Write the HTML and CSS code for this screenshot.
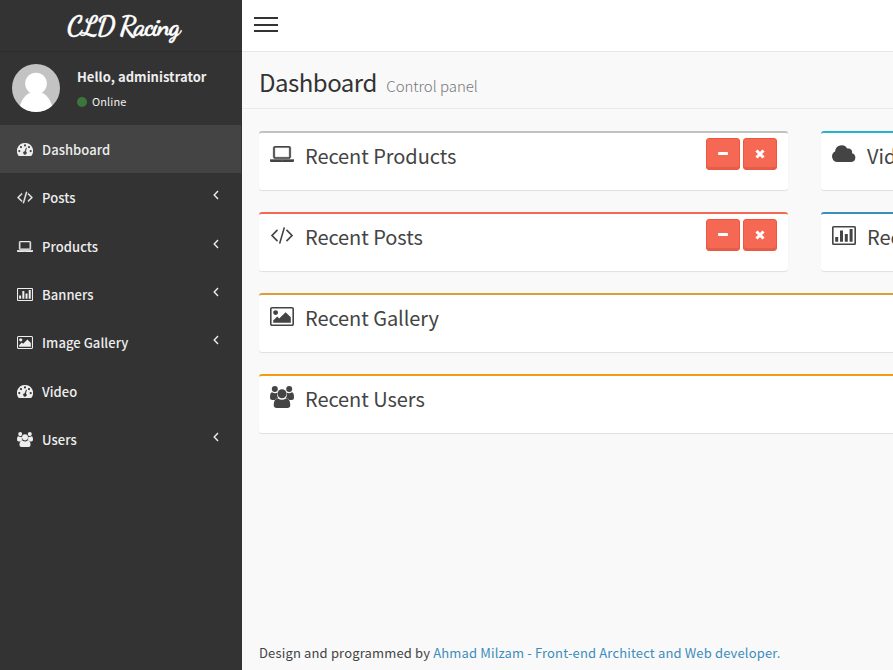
FILE: index.html
```
<!DOCTYPE html>
<html lang="en">
<head>
<meta charset="utf-8">
<title>CLD Racing | Dashboard</title>
<link rel="stylesheet" href="styles.css">
</head>
<body>
<svg class="defs" aria-hidden="true">
  <symbol id="laptop" viewBox="0 256 1920 1280" preserveAspectRatio="none"><path d="M416 1280q-66 0-113-47t-47-113v-704q0-66 47-113t113-47h1088q66 0 113 47t47 113v704q0 66-47 113t-113 47h-1088zm-32-864v704q0 13 9.500 22.500t22.500 9.500h1088q13 0 22.500-9.500t9.500-22.500v-704q0-13-9.500-22.500t-22.500-9.500h-1088q-13 0-22.500 9.500t-9.500 22.500zm1376 928h160v96q0 40-47 68t-113 28h-1600q-66 0-113-28t-47-68v-96h1760zm-720 96q16 0 16-16t-16-16h-160q-16 0-16 16t16 16h160z"/></symbol>
  <symbol id="code" viewBox="0 256 1920 1408"><path d="M617 1399l-50 50q-10 10-23 10t-23-10l-466-466q-10-10-10-23t10-23l466-466q10-10 23-10t23 10l50 50q10 10 10 23t-10 23l-393 393 393 393q10 10 10 23t-10 23zm591-1067l-373 1291q-4 13-15.500 19.500t-23.500 2.500l-62-17q-13-4-19.500-15.500t-2.500-24.500l373-1291q4-13 15.500-19.500t23.500-2.500l62 17q13 4 19.500 15.500t2.500 24.500zm657 651l-466 466q-10 10-23 10t-23-10l-50-50q-10-10-10-23t10-23l393-393-393-393q-10-10-10-23t10-23l50-50q10-10 23-10t23 10l466 466q10 10 10 23t-10 23z"/></symbol>
  <symbol id="chart" viewBox="0 0 24 19" preserveAspectRatio="none"><path fill-rule="evenodd" d="M1.500 0h21Q24 0 24 1.500v16q0 1.500-1.500 1.500h-21Q0 19 0 17.500v-16Q0 0 1.500 0zm.1 1.500v16h20.800v-16zM3.200 11h3v4.800h-3zM8 4.500h3v11.300H8zM12.800 8h3v7.800h-3zM17.600 3h3v12.800h-3z"/></symbol>
  <symbol id="image" viewBox="-64 128 1920 1536" preserveAspectRatio="none"><path d="M576 576q0 80-56 136t-136 56-136-56-56-136 56-136 136-56 136 56 56 136zm1024 384v448h-1408v-192l320-320 160 160 512-512zm96-704h-1600q-13 0-22.500 9.500t-9.500 22.500v1216q0 13 9.500 22.500t22.500 9.500h1600q13 0 22.500-9.500t9.500-22.500v-1216q0-13-9.500-22.500t-22.500-9.500zm160 32v1216q0 66-47 113t-113 47h-1600q-66 0-113-47t-47-113v-1216q0-66 47-113t113-47h1600q66 0 113 47t47 113z"/></symbol>
  <symbol id="cloud" viewBox="0 0 24 17"><path d="M5.500 17A5.500 5.500 0 0 1 3.100 6.600 6.500 6.500 0 0 1 15.300 3.600 3.700 3.700 0 0 1 20 8.200 4.500 4.500 0 0 1 19.500 17z"/></symbol>
  <symbol id="users" viewBox="0 0 24 22" preserveAspectRatio="none"><circle cx="4.800" cy="3.100" r="3"/><circle cx="19.200" cy="3.100" r="3"/><path d="M2 6.200Q4.800 8 7.300 6.800 6.600 10 8.300 12.300 6 12.400 4.800 14H2.500Q0 14 0 11.500 0 6.500 2 6.200zM22 6.200Q19.200 8 16.700 6.800 17.400 10 15.700 12.300 18 12.400 19.200 14h2.300Q24 14 24 11.500 24 6.500 22 6.200z"/><circle cx="12" cy="7.800" r="4.500"/><path d="M8 12.400q4 2.800 8 0 4.300.3 4.300 6.600 0 3-3 3H6.700q-3 0-3-3 0-6.300 4.300-6.600z"/></symbol>
  <symbol id="gauge" viewBox="0 0 16 13"><path fill-rule="evenodd" d="M8 0a8 8 0 0 1 6.900 12.200q-.4.800-1.300.8H2.400q-.9 0-1.300-.8A8 8 0 0 1 8 0zM2.300 7a1.100 1.100 0 1 0 0 2.200 1.100 1.100 0 0 0 0-2.200zM4 3a1.100 1.100 0 1 0 0 2.200A1.100 1.100 0 0 0 4 3zM8 1.300a1.100 1.100 0 1 0 0 2.200 1.100 1.100 0 0 0 0-2.200zM12 3a1.100 1.100 0 1 0 0 2.200A1.100 1.100 0 0 0 12 3zM13.700 7a1.100 1.100 0 1 0 0 2.200 1.100 1.100 0 0 0 0-2.200zM9 4.600l-1.300 3.600a1.700 1.700 0 1 0 1.200.3l1-3.600z"/></symbol>
  <symbol id="angle" viewBox="0 0 6 10"><path d="M5 1 1.200 5 5 9" fill="none" stroke="currentColor" stroke-width="1.400"/></symbol>
  <symbol id="minus" viewBox="0 0 10 10"><rect y="3" width="10" height="3" rx=".8"/></symbol>
  <symbol id="times" viewBox="0 0 10 10"><path d="M1.500 1.500l7 7M8.500 1.500l-7 7" stroke="currentColor" stroke-width="3"/></symbol>
</svg>

<div class="app">
  <aside class="sidebar">
    <a class="logo">CLD Racing</a>
    <div class="user">
      <svg class="avatar" viewBox="0 0 48 48"><defs><clipPath id="round"><circle cx="24" cy="24" r="24"/></clipPath></defs><g clip-path="url(#round)"><path fill="#c3c3c3" d="M0 0h48v48H0z"/><circle cx="24" cy="19.500" r="10.800" fill="#fff"/><path fill="#fff" d="M7 48v-4Q12 29 20 28.500h8Q36 29 41 44v4z"/></g></svg>
      <div class="who">
        <p class="hello">Hello, administrator</p>
        <p class="status"><i class="dot"></i><span>Online</span></p>
      </div>
    </div>
    <nav class="menu">
      <a class="item active"><svg class="ico gauge"><use href="#gauge"/></svg><span>Dashboard</span></a>
      <a class="item"><svg class="ico code"><use href="#code"/></svg><span>Posts</span><svg class="angle"><use href="#angle"/></svg></a>
      <a class="item"><svg class="ico laptop"><use href="#laptop"/></svg><span>Products</span><svg class="angle"><use href="#angle"/></svg></a>
      <a class="item"><svg class="ico"><use href="#chart"/></svg><span>Banners</span><svg class="angle"><use href="#angle"/></svg></a>
      <a class="item"><svg class="ico"><use href="#image"/></svg><span>Image Gallery</span><svg class="angle"><use href="#angle"/></svg></a>
      <a class="item"><svg class="ico gauge"><use href="#gauge"/></svg><span>Video</span></a>
      <a class="item"><svg class="ico users"><use href="#users"/></svg><span>Users</span><svg class="angle"><use href="#angle"/></svg></a>
    </nav>
  </aside>

  <main class="main">
    <header class="topbar"><div class="burger"><i></i><i></i><i></i></div></header>
    <div class="heading"><h1>Dashboard</h1><small>Control panel</small></div>
    <section class="grid">
      <div class="box gray"><svg class="big laptop"><use href="#laptop"/></svg><h3>Recent Products</h3><div class="tools"><button><svg><use href="#minus"/></svg></button><button><svg><use href="#times"/></svg></button></div></div>
      <div class="box teal"><svg class="big cloud"><use href="#cloud"/></svg><h3>Videos</h3></div>
      <div class="box red"><svg class="big code"><use href="#code"/></svg><h3>Recent Posts</h3><div class="tools"><button><svg><use href="#minus"/></svg></button><button><svg><use href="#times"/></svg></button></div></div>
      <div class="box blue"><svg class="big"><use href="#chart"/></svg><h3>Recent Banners</h3></div>
      <div class="box wide gold"><svg class="big"><use href="#image"/></svg><h3>Recent Gallery</h3></div>
      <div class="box wide orange"><svg class="big users"><use href="#users"/></svg><h3>Recent Users</h3></div>
    </section>
    <footer class="footer"><span>Design and programmed by</span> <a>Ahmad Milzam - Front-end Architect and Web developer.</a></footer>
  </main>
</div>
</body>
</html>
```
FILE: styles.css
```
* { box-sizing: border-box; }
body { margin: 0; overflow: hidden; background: #f9f9f9; color: #444; font-family: "Noto Sans CJK SC", sans-serif; }
h1, h3, p { margin: 0; font-weight: 400; }
svg { fill: currentColor; display: block; flex: none; }
.defs { display: none; }
.app { display: flex; width: 893px; height: 670px; overflow: hidden; }

.sidebar { width: 242px; flex: none; background: #333; color: #eee; }
.logo { display: block; height: 52px; padding-left: 4px; border-bottom: 1px solid #2c2c2c; color: #fff; text-align: center; font: bold 27px/53px "Dancing Script", Pacifico, cursive; letter-spacing: -1.3px; -webkit-text-stroke: .5px #fff; }
.user { display: flex; height: 73px; padding: 12px 0 0 12px; }
.avatar { width: 48px; height: 48px; }
.who { margin-left: 17px; white-space: nowrap; }
.hello { font-size: 13px; line-height: 26px; font-weight: 700; letter-spacing: .03px; }
.status { display: flex; align-items: center; font-size: 11px; line-height: 22px; padding-top: 1px; }
.status span { position: relative; top: -1px; letter-spacing: .1px; }
.dot { width: 10px; height: 10px; margin-right: 5px; border-radius: 50%; background: #3c763d; }
.menu { display: grid; grid-auto-rows: 48.33px; }
.item { display: flex; align-items: center; padding: 1px 23px 0 17px; font-size: 13px; font-weight: 500; letter-spacing: .06px; white-space: nowrap; }
.item span { margin-left: 9px; }
.active { background: #444; border-right: 1px solid #333; }
.ico { width: 16px; height: 13px; }
.ico.laptop { height: 11px; stroke: currentColor; stroke-width: 50; }
.ico.code { stroke: currentColor; stroke-width: 50; }
.ico.users { height: 15px; }
.angle { width: 6px; height: 10px; margin: -5px 0 0 auto; }

.main { display: flex; flex-direction: column; flex: 1; min-width: 0; overflow: hidden; }
.topbar { flex: none; height: 52px; padding: 17px 12px; background: #fff; border-bottom: 1px solid #e7e7e7; }
.burger { display: grid; gap: 4.5px; width: 24px; }
.burger i { height: 2px; background: #333; }
.heading { flex: none; display: flex; align-items: baseline; height: 57px; padding: 12px 17px 0; border-bottom: 1px solid #eaeaea; white-space: nowrap; }
h1 { font-size: 24px; line-height: 36px; color: #333; font-weight: 400; letter-spacing: -.5px; }
small { margin-left: 9.5px; font-size: 15px; line-height: 20px; font-weight: 200; color: #777; letter-spacing: -.03px; }
.grid { display: grid; grid-template-columns: 529px 529px; grid-auto-rows: 59px; gap: 22px 33px; padding: 22px 17px 0; }
.box { display: flex; align-items: flex-start; padding: 0 11px; background: #fff; border-top: 2px solid #c1c1c1; border-radius: 3px; box-shadow: 0 1px 1px rgba(0, 0, 0, .1); white-space: nowrap; }
.wide { grid-column: span 2; }
.teal { border-color: #27b3cd; }
.red { border-color: #f56954; }
.blue { border-color: #3c8dbc; }
.gold { border-color: #daa036; }
.orange { border-color: #f39c12; }
h3 { margin: 7px 0 0 11px; font-size: 20px; line-height: 32px; letter-spacing: -.06px; }
.big { width: 24px; height: 19px; margin-top: 12px; }
.big.laptop { height: 16px; margin-top: 13px; stroke: currentColor; stroke-width: 30; }
.big.code { height: 17px; margin-top: 13px; }
.big.cloud { height: 17px; margin-top: 12px; }
.big.users { height: 22px; margin-top: 10px; }
.tools { display: flex; gap: 3px; margin: 5px 0 0 auto; }
button { display: flex; align-items: center; justify-content: center; width: 34px; height: 32px; padding: 0; border: 1px solid #f4543c; border-radius: 3px; background: #f56954; color: #fff; box-shadow: inset 0 -2px 0 rgba(0, 0, 0, .09); }
button svg { width: 10px; height: 10px; }
.footer { margin-top: auto; padding: 0 17px 5px; font-size: 13px; line-height: 24px; letter-spacing: .155px; white-space: nowrap; }
.footer a { color: #3c8dbc; }
```
